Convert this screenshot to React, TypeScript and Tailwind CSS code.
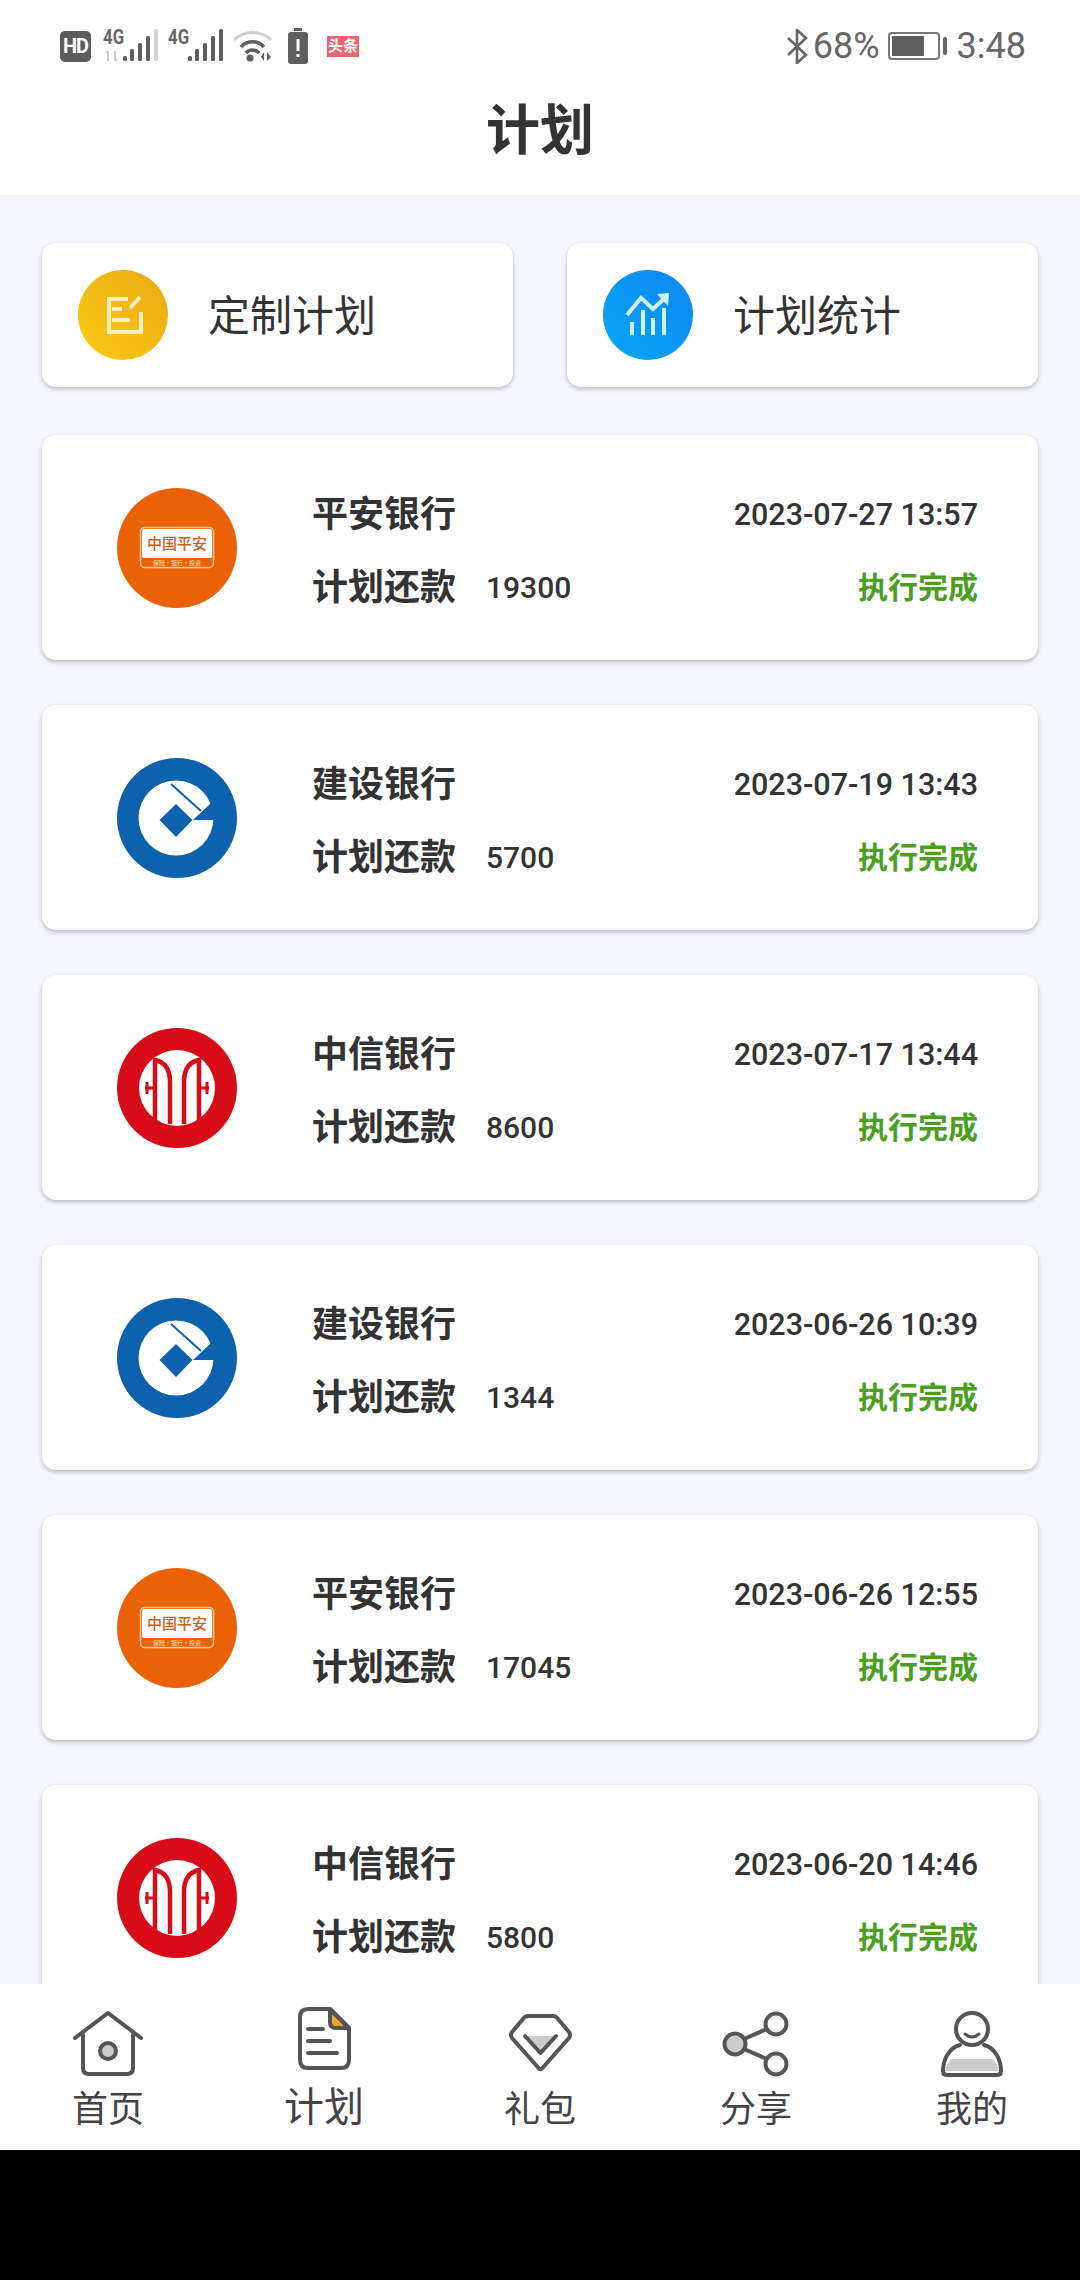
const FONT = "font-['Roboto','Noto_Sans_CJK_SC',sans-serif]";

type Bank = "pingan" | "ccb" | "citic";

interface Plan {
  bank: Bank;
  name: string;
  time: string;
  amount: string;
}

const PLANS: Plan[] = [
  { bank: "pingan", name: "平安银行", time: "2023-07-27 13:57", amount: "19300" },
  { bank: "ccb", name: "建设银行", time: "2023-07-19 13:43", amount: "5700" },
  { bank: "citic", name: "中信银行", time: "2023-07-17 13:44", amount: "8600" },
  { bank: "ccb", name: "建设银行", time: "2023-06-26 10:39", amount: "1344" },
  { bank: "pingan", name: "平安银行", time: "2023-06-26 12:55", amount: "17045" },
  { bank: "citic", name: "中信银行", time: "2023-06-20 14:46", amount: "5800" },
];

function Signal({ dim }: { dim?: boolean }) {
  const bars = [
    [20, 28, 5],
    [27, 21, 12],
    [35, 15, 18],
    [43, 8, 25],
    [51, 1, 32],
  ];
  return (
    <div className="relative h-[36px] w-[55px]">
      <span className="absolute left-0 top-[-3px] origin-top-left scale-x-[0.8] text-[21px] font-bold leading-[24px] text-[#666]">4G</span>
      <svg width="55" height="36" viewBox="0 0 55 36">
        {dim && <path d="M5 23v10M3 25l2-2M12 33V23M12 33l2-2" stroke="#ccc" strokeWidth="2" fill="none" />}
        {bars.map(([x, y, h], i) => (
          <rect key={x} x={x} y={y} width="4" height={h} rx="1.5" fill={dim && i === 4 ? "#d4d4d4" : "#5f5f5f"} />
        ))}
      </svg>
    </div>
  );
}

function StatusBar() {
  return (
    <div className={`flex h-[92px] items-center pl-[60px] pr-[54px] text-[#666] ${FONT}`}>
      <div className="flex h-[31px] w-[31px] items-center justify-center rounded-[5px] bg-[#5c5c5c] text-[20px] font-bold tracking-[-1px] text-white">
        HD
      </div>
      <div className="ml-[12px]">
        <Signal dim />
      </div>
      <div className="ml-[10px]">
        <Signal />
      </div>
      <svg className="ml-[9px]" width="41" height="34" viewBox="0 0 41 34">
        <path d="M2 11C12 1 29 1 39 11" stroke="#cfcfcf" strokeWidth="3" fill="none" />
        <path d="M9 18C15 11 26 11 32 18" stroke="#5f5f5f" strokeWidth="3.5" fill="none" />
        <path d="M14 24C17 20 24 20 27 24" stroke="#5f5f5f" strokeWidth="3.5" fill="none" />
        <circle cx="18" cy="29" r="3.5" fill="#5f5f5f" />
        <path d="M29 28l3-5v9zM35 23v9l4-4z" fill="#5f5f5f" />
      </svg>
      <svg className="ml-[15px]" width="20" height="36" viewBox="0 0 20 36">
        <rect x="6" y="0" width="8" height="3" fill="#5f5f5f" />
        <rect x="0" y="4" width="20" height="32" rx="3" fill="#5f5f5f" />
        <rect x="8.5" y="11" width="3" height="12" fill="#fff" />
        <rect x="8.5" y="26" width="3" height="3" fill="#fff" />
      </svg>
      <div className="ml-[19px] flex h-[21px] w-[32px] items-center justify-center bg-[#e8646e] text-[15px] font-bold leading-none text-white">
        头条
      </div>
      <div className="flex-1" />
      <svg width="22" height="35" viewBox="0 0 22 35">
        <path d="M2 9L20 26L11 34V1L20 9L2 26" stroke="#666" strokeWidth="2.6" fill="none" />
      </svg>
      <span className="ml-[5px] text-[36px] leading-none">68%</span>
      <div className="ml-[8px] flex items-center">
        <div className="flex h-[28px] w-[52px] items-stretch rounded-[4px] border-2 border-[#777] p-[2px]">
          <div className="w-[32px] bg-[#5f5f5f]" />
        </div>
        <div className="ml-[3px] h-[18px] w-[4px] rounded-[2px] bg-[#666]" />
      </div>
      <span className="ml-[10px] text-[36px] leading-none">3:48</span>
    </div>
  );
}

function QuickCard({ title, children }: { title: string; children: React.ReactNode }) {
  return (
    <div className="flex h-[144px] w-[471px] items-center rounded-[14px] bg-white pl-[36px] shadow-[0_2px_4px_rgba(0,0,0,0.25)]">
      {children}
      <span className="ml-[40px] mt-[3px] text-[42px] text-[#333]">{title}</span>
    </div>
  );
}

function BankLogo({ bank }: { bank: Bank }) {
  if (bank === "pingan") {
    return (
      <svg width="120" height="120" viewBox="0 0 120 120">
        <circle cx="60" cy="60" r="60" fill="#ea6205" />
        <rect x="23.5" y="39.5" width="73" height="40" rx="4" fill="none" stroke="#f8c9a0" strokeWidth="1.5" />
        <rect x="25" y="41" width="70" height="29" rx="2" fill="#fff" />
        <text x="60" y="60.5" textAnchor="middle" fontSize="15" fontWeight="500" fill="#c8611e" fontFamily="'Noto Sans CJK SC'">
          中国平安
        </text>
        <text x="60" y="77" textAnchor="middle" fontSize="6" fill="#fde3cd" fontFamily="'Noto Sans CJK SC'">
          保险·银行·投资
        </text>
      </svg>
    );
  }
  if (bank === "ccb") {
    return (
      <svg width="120" height="120" viewBox="0 0 120 120">
        <circle cx="60" cy="60" r="60" fill="#0d62ad" />
        <circle cx="59" cy="60" r="37.5" fill="#fff" />
        <path d="M76 62L98 62L100 42L94 45z" fill="#0d62ad" />
        <path d="M54 26L84 53" stroke="#0d62ad" strokeWidth="2" />
        <path d="M59 46L75.5 62L59 79L42.5 62z" fill="#0d62ad" />
      </svg>
    );
  }
  return (
    <svg width="120" height="120" viewBox="0 0 120 120">
      <circle cx="60" cy="60" r="60" fill="#d70c18" />
      <circle cx="60" cy="60" r="38" fill="#fff" />
      <path d="M38 96V32C48 34 53 42 53 54V96M82 96V32C72 34 67 42 67 54V96" stroke="#d70c18" strokeWidth="4.5" fill="none" />
      <path d="M28 60H38M30 54V66M92 60H82M90 54V66" stroke="#d70c18" strokeWidth="3" fill="none" />
    </svg>
  );
}

function PlanCard({ plan }: { plan: Plan }) {
  return (
    <div className="flex h-[225px] shrink-0 items-center rounded-[14px] bg-white pl-[75px] pr-[60px] shadow-[0_2px_4px_rgba(0,0,0,0.25)]">
      <BankLogo bank={plan.bank} />
      <div className="ml-[75px] mt-[7px] flex flex-1 flex-col gap-[37px]">
        <div className="flex h-[36px] items-center justify-between">
          <span className="text-[36px] font-bold text-[#333]">{plan.name}</span>
          <span className="text-[30.5px] font-medium text-[#333]">{plan.time}</span>
        </div>
        <div className="flex h-[36px] items-center justify-between">
          <div className="flex items-center">
            <span className="text-[36px] font-bold text-[#333]">计划还款</span>
            <span className="ml-[30px] text-[30px] font-medium text-[#333]">{plan.amount}</span>
          </div>
          <span className="text-[30px] font-bold text-[#4a9f1e]">执行完成</span>
        </div>
      </div>
    </div>
  );
}

const S = { stroke: "#555", strokeWidth: 4, fill: "none", strokeLinecap: "round", strokeLinejoin: "round" } as const;

function NavIcon({ name }: { name: string }) {
  return (
    <svg width="72" height="72" viewBox="0 0 72 72" className="overflow-visible">
      {name === "home" && (
        <>
          <path d="M3 33L36 8L69 33" {...S} />
          <path d="M11 30V63Q11 69 17 69H55Q61 69 61 63V30" {...S} />
          <circle cx="36" cy="46" r="8" fill="#ccc" stroke="#555" strokeWidth="4" />
        </>
      )}
      {name === "plan" && (
        <>
          <path d="M42 4V17Q42 23 48 23H61Z" fill="#f5a623" stroke="#555" strokeWidth="4" strokeLinejoin="round" />
          <path d="M42 4H20Q12 4 12 12V55Q12 63 20 63H53Q61 63 61 55V23Z" {...S} />
          <path d="M20 24H35M20 36H42M20 48H49" {...S} />
        </>
      )}
      {name === "gift" && (
        <>
          <path d="M24 11H49Q52 11 54 14L65 27Q67 30 65 33L38.5 63Q36.5 65.5 34.5 63L8 33Q6 30 8 27L19 14Q21 11 24 11Z" {...S} />
          <path d="M22 31H51L36.5 46Z" fill="#ccc" />
          <path d="M21 31L36.5 48L52 31" {...S} />
        </>
      )}
      {name === "share" && (
        <>
          <path d="M24 34L47 24M24 44L47 54" {...S} />
          <circle cx="15" cy="39" r="10.5" fill="#ccc" stroke="#555" strokeWidth="4" />
          <circle cx="56" cy="19" r="10.5" fill="#fff" stroke="#555" strokeWidth="4" />
          <circle cx="56" cy="59" r="10.5" fill="#fff" stroke="#555" strokeWidth="4" />
        </>
      )}
      {name === "me" && (
        <>
          <path d="M9 66H63Q61 58 56 54H16Q11 58 9 66Z" fill="#ccc" />
          <path d="M24 40C12 43 7 56 7 66Q7 70 11 70H61Q65 70 65 66C65 56 60 43 48 40" {...S} />
          <circle cx="36" cy="24" r="16" fill="#fff" stroke="#555" strokeWidth="4" />
          <path d="M29 29Q36 35 43 29" {...S} strokeWidth={3} />
        </>
      )}
    </svg>
  );
}

const NAV = [
  { key: "home", label: "首页" },
  { key: "plan", label: "计划" },
  { key: "gift", label: "礼包" },
  { key: "share", label: "分享" },
  { key: "me", label: "我的" },
];

export default function App() {
  return (
    <div className={`flex h-[2280px] w-[1080px] flex-col overflow-hidden bg-black ${FONT}`}>
      <header className="flex h-[195px] shrink-0 flex-col bg-white">
        <StatusBar />
        <h1 className="mt-[15px] text-center text-[54px] font-bold leading-[50px] text-[#333]">计划</h1>
      </header>

      <main className="flex flex-1 flex-col overflow-hidden bg-[#f5f6fe] px-[42px] pt-[48px]">
        <div className="flex shrink-0 justify-between">
          <QuickCard title="定制计划">
            <div className="h-[90px] w-[90px] rounded-full bg-linear-to-tr from-[#fccb12] to-[#e8a916]">
              <svg width="90" height="90" viewBox="0 0 90 90" fill="none" stroke="#fdf0c0" strokeWidth="4">
                <path d="M50 29H31V62H63V42" />
                <path d="M52 38L62 27" />
                <path d="M34 39H44M34 50H52" />
              </svg>
            </div>
          </QuickCard>
          <QuickCard title="计划统计">
            <div className="h-[90px] w-[90px] rounded-full bg-linear-to-tr from-[#0aa8f8] to-[#0f85ef]">
              <svg width="90" height="90" viewBox="0 0 90 90" fill="none" stroke="#d0f2ff" strokeWidth="4">
                <path d="M29 65V52M40 65V40M50 65V48M61 65V38" />
                <path d="M24 45L38 28L50 39L63 27" />
                <path d="M54 24L66 23L65 36Z" fill="#d0f2ff" stroke="none" />
              </svg>
            </div>
          </QuickCard>
        </div>

        <div className="mt-[48px] flex flex-col gap-[45px]">
          {PLANS.map((plan) => (
            <PlanCard key={plan.time} plan={plan} />
          ))}
        </div>
      </main>

      <nav className="grid h-[166px] shrink-0 grid-cols-5 bg-white pt-[21px]">
        {NAV.map((item) => (
          <div key={item.key} className="flex flex-col items-center">
            <NavIcon name={item.key} />
            <span
              className={
                item.key === "plan"
                  ? "mt-[11px] text-[40px] leading-[40px] text-[#444]"
                  : "mt-[15px] text-[36px] leading-[36px] text-[#444]"
              }
            >
              {item.label}
            </span>
          </div>
        ))}
      </nav>

      <div className="h-[130px] shrink-0 bg-black" />
    </div>
  );
}
